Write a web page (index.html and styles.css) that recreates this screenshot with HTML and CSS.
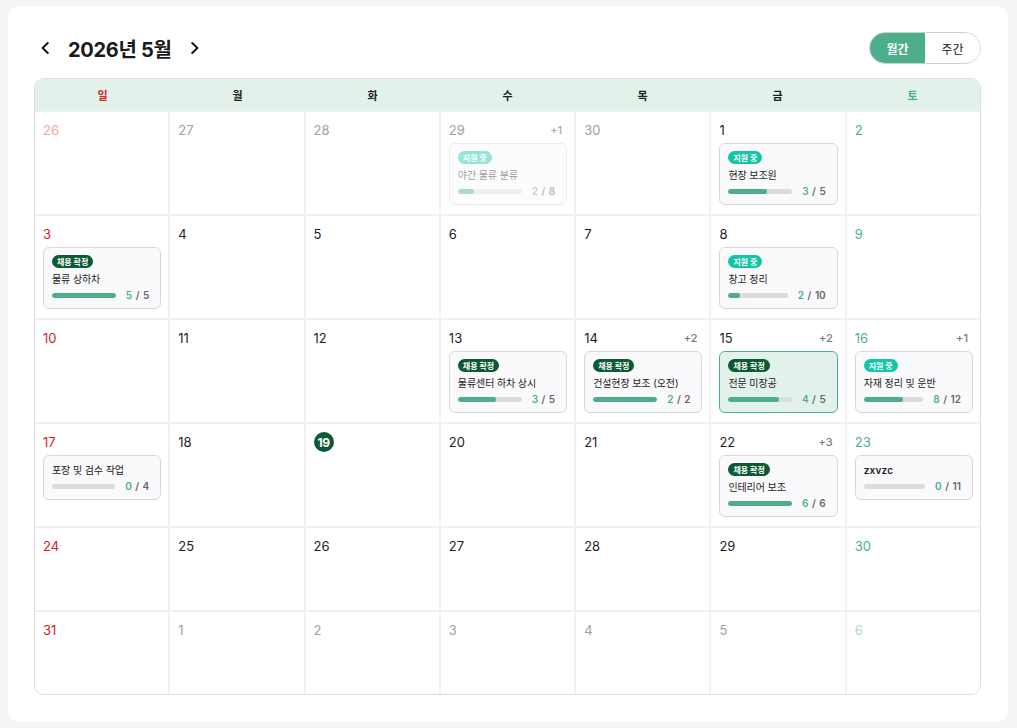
FILE: index.html
```
<!doctype html>
<html lang="ko">
    <head>
        <title>근무 캘린더</title>
        <meta charset="utf-8" />
        <meta name="viewport" content="width=device-width, initial-scale=1"/>
        <link rel="stylesheet" href="styles.css">
    </head>
    <body>
        <div class="panel">
            <div class="toolbar">
                <div class="month-nav">
                    <button type="button" class="nav-btn" aria-label="이전 달">
                        <svg width="10" height="12" viewBox="0 0 10 12"><path d="M7.8 1 2.6 6 7.8 11" fill="none" stroke="#111" stroke-width="1.9" stroke-linecap="round" stroke-linejoin="round"/></svg>
                    </button>
                    <h1>2026년 5월</h1>
                    <button type="button" class="nav-btn" aria-label="다음 달">
                        <svg width="10" height="12" viewBox="0 0 10 12"><path d="M2.2 1 7.4 6 2.2 11" fill="none" stroke="#111" stroke-width="1.9" stroke-linecap="round" stroke-linejoin="round"/></svg>
                    </button>
                </div>
                <div class="view-toggle">
                    <button type="button" class="active">월간</button>
                    <button type="button">주간</button>
                </div>
            </div>

            <div class="calendar">
                <div class="weekdays">
                    <div class="sun">일</div>
                    <div>월</div>
                    <div>화</div>
                    <div>수</div>
                    <div>목</div>
                    <div>금</div>
                    <div class="sat">토</div>
                </div>
                <div class="days">
                    <!-- week 1 -->
                    <div class="day other sun"><div class="day-head"><span class="num">26</span></div></div>
                    <div class="day other"><div class="day-head"><span class="num">27</span></div></div>
                    <div class="day other"><div class="day-head"><span class="num">28</span></div></div>
                    <div class="day other">
                        <div class="day-head"><span class="num">29</span><span class="more">+1</span></div>
                        <div class="job past">
                            <span class="badge open">지원 중</span>
                            <div class="job-title">야간 물류 분류</div>
                            <div class="job-progress"><div class="bar"><i style="width:25%"></i></div><span class="count"><b>2</b> / 8</span></div>
                        </div>
                    </div>
                    <div class="day other"><div class="day-head"><span class="num">30</span></div></div>
                    <div class="day">
                        <div class="day-head"><span class="num">1</span></div>
                        <div class="job">
                            <span class="badge open">지원 중</span>
                            <div class="job-title">현장 보조원</div>
                            <div class="job-progress"><div class="bar"><i style="width:60%"></i></div><span class="count"><b>3</b> / 5</span></div>
                        </div>
                    </div>
                    <div class="day sat"><div class="day-head"><span class="num">2</span></div></div>

                    <!-- week 2 -->
                    <div class="day sun">
                        <div class="day-head"><span class="num">3</span></div>
                        <div class="job">
                            <span class="badge hired">채용 확정</span>
                            <div class="job-title">물류 상하차</div>
                            <div class="job-progress"><div class="bar"><i style="width:100%"></i></div><span class="count"><b>5</b> / 5</span></div>
                        </div>
                    </div>
                    <div class="day"><div class="day-head"><span class="num">4</span></div></div>
                    <div class="day"><div class="day-head"><span class="num">5</span></div></div>
                    <div class="day"><div class="day-head"><span class="num">6</span></div></div>
                    <div class="day"><div class="day-head"><span class="num">7</span></div></div>
                    <div class="day">
                        <div class="day-head"><span class="num">8</span></div>
                        <div class="job">
                            <span class="badge open">지원 중</span>
                            <div class="job-title">창고 정리</div>
                            <div class="job-progress"><div class="bar"><i style="width:20%"></i></div><span class="count"><b>2</b> / 10</span></div>
                        </div>
                    </div>
                    <div class="day sat"><div class="day-head"><span class="num">9</span></div></div>

                    <!-- week 3 -->
                    <div class="day sun"><div class="day-head"><span class="num">10</span></div></div>
                    <div class="day"><div class="day-head"><span class="num">11</span></div></div>
                    <div class="day"><div class="day-head"><span class="num">12</span></div></div>
                    <div class="day">
                        <div class="day-head"><span class="num">13</span></div>
                        <div class="job">
                            <span class="badge hired">채용 확정</span>
                            <div class="job-title">물류센터 하차 상시</div>
                            <div class="job-progress"><div class="bar"><i style="width:60%"></i></div><span class="count"><b>3</b> / 5</span></div>
                        </div>
                    </div>
                    <div class="day">
                        <div class="day-head"><span class="num">14</span><span class="more">+2</span></div>
                        <div class="job">
                            <span class="badge hired">채용 확정</span>
                            <div class="job-title">건설현장 보조 (오전)</div>
                            <div class="job-progress"><div class="bar"><i style="width:100%"></i></div><span class="count"><b>2</b> / 2</span></div>
                        </div>
                    </div>
                    <div class="day">
                        <div class="day-head"><span class="num">15</span><span class="more">+2</span></div>
                        <div class="job selected">
                            <span class="badge hired">채용 확정</span>
                            <div class="job-title">전문 미장공</div>
                            <div class="job-progress"><div class="bar"><i style="width:80%"></i></div><span class="count"><b>4</b> / 5</span></div>
                        </div>
                    </div>
                    <div class="day sat">
                        <div class="day-head"><span class="num">16</span><span class="more">+1</span></div>
                        <div class="job">
                            <span class="badge open">지원 중</span>
                            <div class="job-title">자재 정리 및 운반</div>
                            <div class="job-progress"><div class="bar"><i style="width:66.7%"></i></div><span class="count"><b>8</b> / 12</span></div>
                        </div>
                    </div>

                    <!-- week 4 -->
                    <div class="day sun">
                        <div class="day-head"><span class="num">17</span></div>
                        <div class="job">
                            <div class="job-title">포장 및 검수 작업</div>
                            <div class="job-progress"><div class="bar"><i style="width:0%"></i></div><span class="count"><b>0</b> / 4</span></div>
                        </div>
                    </div>
                    <div class="day"><div class="day-head"><span class="num">18</span></div></div>
                    <div class="day today"><div class="day-head"><span class="num">19</span></div></div>
                    <div class="day"><div class="day-head"><span class="num">20</span></div></div>
                    <div class="day"><div class="day-head"><span class="num">21</span></div></div>
                    <div class="day">
                        <div class="day-head"><span class="num">22</span><span class="more">+3</span></div>
                        <div class="job">
                            <span class="badge hired">채용 확정</span>
                            <div class="job-title">인테리어 보조</div>
                            <div class="job-progress"><div class="bar"><i style="width:100%"></i></div><span class="count"><b>6</b> / 6</span></div>
                        </div>
                    </div>
                    <div class="day sat">
                        <div class="day-head"><span class="num">23</span></div>
                        <div class="job">
                            <div class="job-title latin">zxvzc</div>
                            <div class="job-progress"><div class="bar"><i style="width:0%"></i></div><span class="count"><b>0</b> / 11</span></div>
                        </div>
                    </div>

                    <!-- week 5 -->
                    <div class="day sun"><div class="day-head"><span class="num">24</span></div></div>
                    <div class="day"><div class="day-head"><span class="num">25</span></div></div>
                    <div class="day"><div class="day-head"><span class="num">26</span></div></div>
                    <div class="day"><div class="day-head"><span class="num">27</span></div></div>
                    <div class="day"><div class="day-head"><span class="num">28</span></div></div>
                    <div class="day"><div class="day-head"><span class="num">29</span></div></div>
                    <div class="day sat"><div class="day-head"><span class="num">30</span></div></div>

                    <!-- week 6 -->
                    <div class="day sun"><div class="day-head"><span class="num">31</span></div></div>
                    <div class="day other"><div class="day-head"><span class="num">1</span></div></div>
                    <div class="day other"><div class="day-head"><span class="num">2</span></div></div>
                    <div class="day other"><div class="day-head"><span class="num">3</span></div></div>
                    <div class="day other"><div class="day-head"><span class="num">4</span></div></div>
                    <div class="day other"><div class="day-head"><span class="num">5</span></div></div>
                    <div class="day other sat"><div class="day-head"><span class="num">6</span></div></div>
                </div>
            </div>
        </div>
    </body>
</html>
```

FILE: styles.css
```
* {
    box-sizing: border-box;
}
body {
    margin: 0;
    padding: 6px 9px 6px 8px;
    background-color: #f4f5f7;
    font-family: Inter, "Noto Sans CJK KR", sans-serif;
    color: #1a1a1a;
}
.panel {
    background-color: #fff;
    border-radius: 12px;
    padding: 26px 27px 27px 26px;
}

/* toolbar */
.toolbar {
    display: flex;
    align-items: center;
    justify-content: space-between;
    height: 32px;
    margin-bottom: 14px;
}
.month-nav {
    display: flex;
    align-items: center;
    gap: 18px;
    padding-left: 6px;
}
.month-nav h1 {
    margin: 0;
    font-size: 20px;
    font-weight: 700;
    letter-spacing: -0.3px;
}
.nav-btn {
    border: 0;
    background: none;
    padding: 0;
    width: 10px;
    height: 20px;
    display: flex;
    align-items: center;
    justify-content: center;
    cursor: pointer;
}
.view-toggle {
    display: flex;
    border: 1px solid #cfcfcf;
    border-radius: 16px;
    overflow: hidden;
    height: 32px;
}
.view-toggle button {
    border: 0;
    background: #fff;
    font-family: inherit;
    font-size: 12px;
    color: #222;
    width: 55px;
    padding: 0;
    cursor: pointer;
}
.view-toggle button.active {
    background-color: #4caf8a;
    color: #fff;
    font-weight: 700;
}

/* calendar grid */
.calendar {
    border: 1px solid #dedede;
    border-radius: 10px;
    overflow: hidden;
}
.weekdays {
    display: grid;
    grid-template-columns: repeat(7, 1fr);
    background-color: #e2f1ea;
    height: 32px;
    align-items: center;
    text-align: center;
    font-size: 11px;
    font-weight: 700;
    color: #222;
}
.weekdays .sun {
    color: #d32626;
}
.weekdays .sat {
    color: #4caf8a;
}
.days {
    display: grid;
    grid-template-columns: repeat(7, 1fr);
    gap: 2px;
    background-color: #f1f1f1;
    padding-top: 1px;
}
.day {
    background-color: #fff;
    min-height: 82px;
    padding: 8px 7px 9px 8px;
}
.day-head {
    display: flex;
    justify-content: space-between;
    align-items: center;
    height: 20px;
    margin-bottom: 3px;
}
.num {
    font-size: 13px;
    font-weight: 400;
    color: #1e1e1e;
}
.more {
    font-size: 11px;
    font-weight: 500;
    color: #777;
    padding-right: 5px;
}
.day.sun .num {
    color: #d62020;
}
.day.sat .num {
    color: #4caf8a;
}
.day.other .num {
    color: #a0a0a0;
}
.day.other .more {
    color: #aaa;
}
.day.other.sun .num {
    color: #f0a3a3;
}
.day.other.sat .num {
    color: #a9dcc7;
}
.day.today .num {
    display: inline-flex;
    align-items: center;
    justify-content: center;
    width: 20px;
    height: 20px;
    border-radius: 50%;
    background-color: #0b5a33;
    color: #fff;
    font-weight: 700;
    font-size: 12px;
    letter-spacing: -0.3px;
}

/* job card */
.job {
    display: flex;
    flex-direction: column;
    align-items: flex-start;
    border: 1px solid #d8d8dc;
    border-radius: 6px;
    background-color: #fafafc;
    padding: 7px 8px;
}
.job.past {
    opacity: 0.45;
}
.job.selected {
    background-color: #e2f2ea;
    border-color: #4caf8a;
}
.badge {
    display: block;
    font-size: 8px;
    font-weight: 700;
    line-height: 10px;
    height: 13px;
    padding: 2px 5px 1px;
    border-radius: 7px;
    color: #fff;
}
.badge.open {
    background-color: #12c6a6;
}
.badge.hired {
    background-color: #0b5a33;
}
.job-title {
    font-size: 10px;
    line-height: 15px;
    height: 15px;
    color: #222;
    white-space: nowrap;
    letter-spacing: -0.1px;
}
.badge + .job-title {
    margin-top: 4px;
}
.job-title.latin {
    font-weight: 600;
    letter-spacing: 0.2px;
}
.job-progress {
    align-self: stretch;
    display: flex;
    align-items: center;
    gap: 10px;
    height: 12px;
    margin-top: 2px;
}
.bar {
    flex: 1;
    height: 5px;
    border-radius: 3px;
    background-color: #dcdcdc;
    overflow: hidden;
}
.bar i {
    display: block;
    height: 100%;
    border-radius: 3px;
    background-color: #4caf8a;
}
.count {
    font-size: 10px;
    font-weight: 600;
    line-height: 12px;
    color: #666;
    white-space: nowrap;
    padding-right: 3px;
    word-spacing: 1px;
}
.count b {
    color: #4caf8a;
    font-weight: 600;
}
```
